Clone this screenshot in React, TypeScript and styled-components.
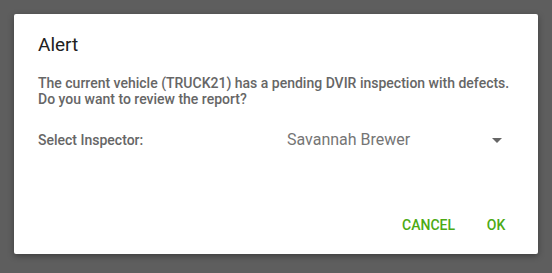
import React from 'react'
import styled, { createGlobalStyle } from 'styled-components'

const GlobalStyle = createGlobalStyle`
  html, body {
    margin: 0;
    padding: 0;
    background: #5e5e5e;
    font-family: Roboto, "Liberation Sans", sans-serif;
  }
`

const Overlay = styled.div`
  width: 552px;
  height: 273px;
  padding: 14px;
  box-sizing: border-box;
  background: #5e5e5e;
`

const DialogCard = styled.div`
  width: 524px;
  height: 240px;
  box-sizing: border-box;
  background: #ffffff;
  border-radius: 2px;
  box-shadow: 0 2px 6px rgba(0, 0, 0, 0.35);
  padding: 19px 0 11px;
  display: flex;
  flex-direction: column;
`

const Title = styled.h2`
  margin: 0 24px;
  font-size: 19px;
  line-height: 24px;
  font-weight: 400;
  color: #212121;
`

const Message = styled.p`
  margin: 18px 24px 0;
  font-size: 14px;
  line-height: 16px;
  font-weight: 500;
  color: #666666;
`

const FieldRow = styled.div`
  margin: 23px 24px 0;
  display: flex;
  align-items: baseline;
`

const FieldLabel = styled.span`
  width: 249px;
  flex-shrink: 0;
  font-size: 14px;
  line-height: 20px;
  font-weight: 500;
  color: #666666;
`

const SelectBox = styled.div`
  flex: 1;
  display: flex;
  align-items: center;
  justify-content: space-between;
  padding-right: 12px;
  font-size: 16px;
  line-height: 20px;
  color: #757575;
`

const Caret = styled.span`
  width: 0;
  height: 0;
  border-left: 5px solid transparent;
  border-right: 5px solid transparent;
  border-top: 5px solid #666666;
`

const Footer = styled.div`
  margin-top: auto;
  display: flex;
  justify-content: flex-end;
  gap: 1px;
  padding-right: 10px;
`

const TextButton = styled.button`
  min-width: 64px;
  height: 36px;
  padding: 0 8px;
  border: none;
  background: transparent;
  font-family: Roboto, "Liberation Sans", sans-serif;
  font-size: 14px;
  line-height: 36px;
  font-weight: 500;
  text-transform: uppercase;
  color: #4caa14;
  cursor: pointer;
`

export default function App() {
  return (
    <>
      <GlobalStyle />
      <Overlay>
        <DialogCard>
          <Title>Alert</Title>
          <Message>
            The current vehicle (TRUCK21) has a pending DVIR inspection with defects.
            <br />
            Do you want to review the report?
          </Message>
          <FieldRow>
            <FieldLabel>Select Inspector:</FieldLabel>
            <SelectBox>
              <span>Savannah Brewer</span>
              <Caret />
            </SelectBox>
          </FieldRow>
          <Footer>
            <TextButton>Cancel</TextButton>
            <TextButton>OK</TextButton>
          </Footer>
        </DialogCard>
      </Overlay>
    </>
  )
}
